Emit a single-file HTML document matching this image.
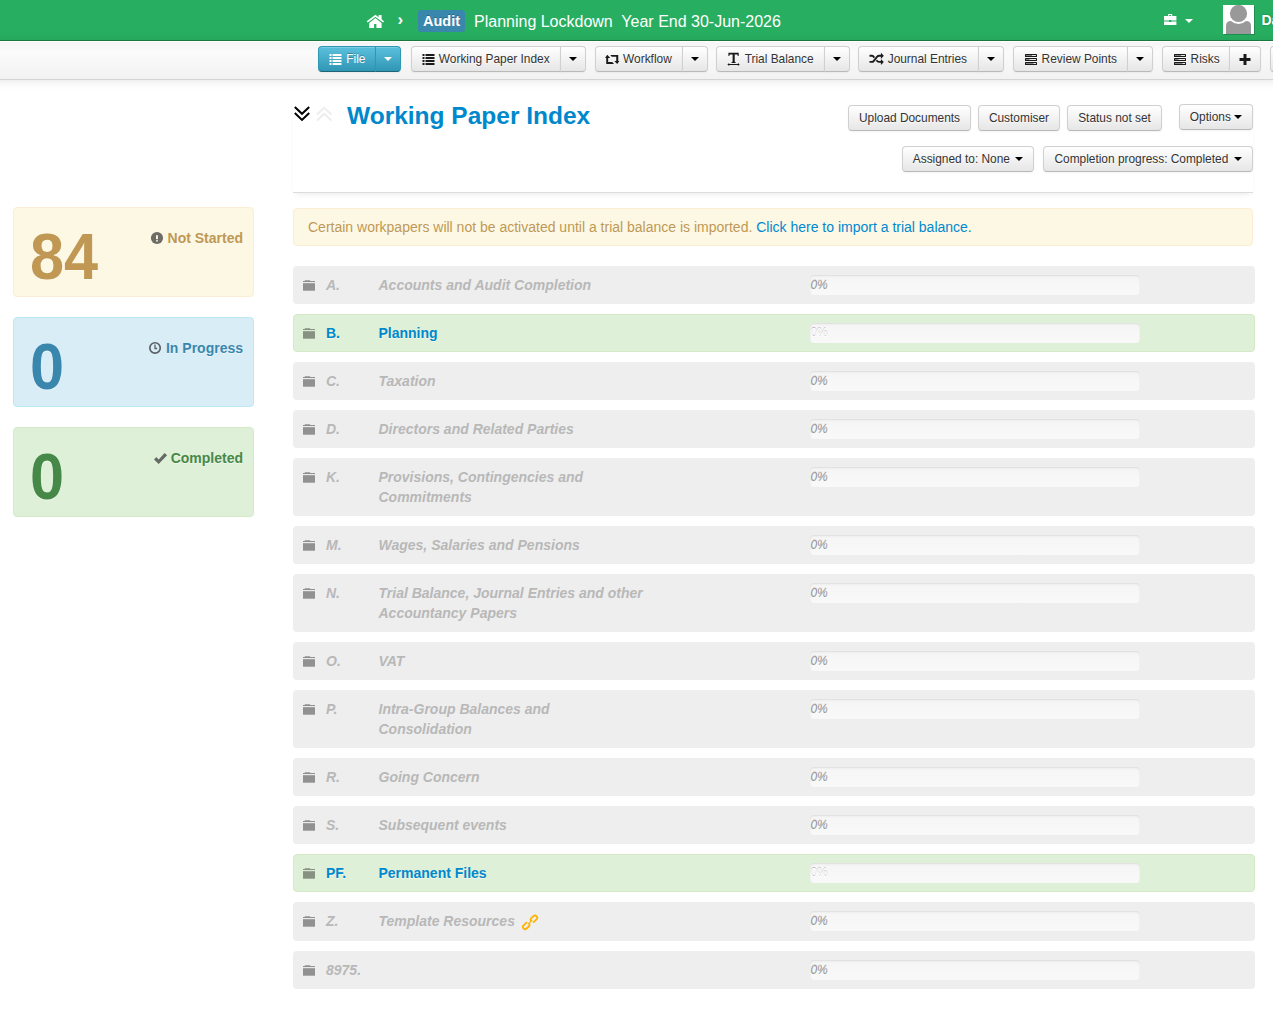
<!DOCTYPE html>
<html lang="en">
<head>
<meta charset="utf-8">
<title>Working Paper Index</title>
<style>
*{box-sizing:border-box;}
html,body{margin:0;padding:0;}
body{width:1273px;height:1017px;overflow:hidden;background:#fff;font-family:"Liberation Sans",Arial,Helvetica,sans-serif;font-size:14px;line-height:20px;color:#333;position:relative;}
a{color:#0088cc;text-decoration:none;}
svg{display:block;}
/* top navbar */
#nav{position:absolute;left:0;top:0;width:1273px;height:41px;background:#27ae60;border-bottom:1px solid #1a7d43;}
#nav .abs{position:absolute;}
#title{position:absolute;left:474px;top:11px;font-size:16px;line-height:21px;color:#fff;white-space:pre;}
#badge{position:absolute;left:418px;top:10px;width:47px;height:22px;border-radius:3px;background:#3a87ad;color:#fff;font-weight:bold;font-size:14.5px;line-height:23px;text-align:center;text-shadow:0 -1px 0 rgba(0,0,0,.25);}
#crumb{position:absolute;left:397.5px;top:10px;color:#fff;font-size:17px;line-height:20px;font-weight:bold;}
#avatar{position:absolute;left:1223px;top:5px;width:31px;height:29px;background:#fff;overflow:hidden;box-shadow:1px 1px 0 rgba(0,0,0,.18);}
#uname{position:absolute;left:1261.5px;top:10px;color:#fff;font-weight:bold;font-size:14px;line-height:20px;white-space:nowrap;text-shadow:0 0 2px rgba(0,80,30,.55);}
/* toolbar */
#bar{position:absolute;left:-20px;top:41px;width:1313px;padding-left:20px;height:39px;background:linear-gradient(#ffffff 0,#ffffff 1px,#f5f5f5 1px,#fbfbfb 11px,#f2f2f2 100%);border-bottom:1px solid #d4d4d4;box-shadow:0 1px 10px rgba(0,0,0,.1);}
.btn{position:absolute;height:26px;border:1px solid #cccccc;border-color:#d0d0d0 #d0d0d0 #b9b9b9;border-radius:4px;background:linear-gradient(#ffffff,#e6e6e6);color:#333;font-size:11.9px;line-height:20px;padding:2px 0;text-align:center;white-space:nowrap;text-shadow:0 1px 1px rgba(255,255,255,.75);box-shadow:inset 0 1px 0 rgba(255,255,255,.2),0 1px 2px rgba(0,0,0,.05);}
.btn.l{border-radius:4px 0 0 4px;}
.btn.r{border-radius:0 4px 4px 0;}
.btn.info{background:linear-gradient(#5bc0de,#2f96b4);border-color:#2f96b4 #2f96b4 #1f6377;color:#fff;text-shadow:0 -1px 0 rgba(0,0,0,.25);}
.btn svg{display:inline-block;vertical-align:-2px;margin-right:4px;}
.caret{display:inline-block;width:0;height:0;border-left:4px solid transparent;border-right:4px solid transparent;border-top:4px solid #000;vertical-align:middle;}
.btn .caret{margin-top:-1px;}
.btn.info .caret{border-top-color:#fff;}

#tb{position:absolute;left:20px;top:5px;white-space:nowrap;font-size:0;}
.bg{position:absolute;top:0;white-space:nowrap;}
.tbtn{display:inline-block;vertical-align:top;height:26px;border:1px solid #cccccc;border-color:#d0d0d0 #d0d0d0 #b9b9b9;background:linear-gradient(#ffffff,#e6e6e6);color:#333;font-size:11.9px;line-height:20px;padding:2px 10px;white-space:nowrap;text-shadow:0 1px 1px rgba(255,255,255,.75);box-shadow:inset 0 1px 0 rgba(255,255,255,.2),0 1px 2px rgba(0,0,0,.05);}
.tbtn.l{border-radius:4px 0 0 4px;}
.tbtn.r{border-radius:0 4px 4px 0;margin-left:-1px;}
.tbtn.c{padding:2px 8px;width:26px;}
.tbtn.p{padding:2px 8px;width:32px;}
.tbtn.info{background:linear-gradient(#5bc0de,#2f96b4);border-color:#2f96b4 #2f96b4 #1f6377;color:#fff;text-shadow:0 -1px 0 rgba(0,0,0,.25);}
.tbtn svg{display:inline-block;vertical-align:-3px;margin-right:3.3px;}
.tbtn.p svg{margin-right:0;}
.tbtn .caret{margin-top:-1px;}
.tbtn.info .caret{border-top-color:#fff;}
/* heading */
#h{position:absolute;left:347px;top:101px;margin:0;font-size:24.5px;line-height:30px;font-weight:bold;color:#0088cc;white-space:nowrap;}
#hr{position:absolute;left:293px;top:96px;width:960px;height:97px;border-bottom:1px solid #dcdcdc;box-shadow:0 4px 6px -3px rgba(0,0,0,.09);}
/* alert */
#alert{position:absolute;left:293px;top:208px;width:960px;height:38px;background:#fcf8e3;border:1px solid #fbeed5;border-radius:4px;color:#c09853;font-size:14px;line-height:20px;padding:8px 14px;white-space:nowrap;text-shadow:0 1px 0 rgba(255,255,255,.5);}
/* stat boxes */
.stat{position:absolute;left:13px;width:241px;height:90px;border-radius:4px;border:1px solid;text-shadow:0 1px 0 rgba(255,255,255,.5);}
.stat .num{position:absolute;left:16px;top:14px;font-size:64.5px;line-height:70px;font-weight:bold;transform:scaleX(.95);transform-origin:0 0;}
.stat .lab{position:absolute;right:10px;top:20px;font-size:14px;line-height:20px;font-weight:bold;white-space:nowrap;}
.stat .lab svg{display:inline-block;vertical-align:-1px;margin-right:2px;}
.si{position:absolute;left:0;top:0;}
#s1{top:207px;background:#fcf8e3;border-color:#fbeed5;color:#c09853;}
#s2{top:317px;background:#d9edf7;border-color:#bce8f1;color:#3a87ad;}
#s3{top:427px;background:#dff0d8;border-color:#d6e9c6;color:#468847;}
.lnk{position:absolute;left:228px;top:11.5px;}
/* rows */
.row{position:absolute;left:293px;width:962px;background:#eeeeee;border-radius:4px;font-size:14px;line-height:20px;font-weight:bold;font-style:italic;color:#b8b8b8;}
.row.on{background:#dff0d8;border:1px solid #d6e9c6;font-style:normal;color:#0088cc;text-shadow:0 1px 0 rgba(255,255,255,.5);}
.row .fold{position:absolute;left:10px;top:14px;}
.row.on .fold{left:9px;top:13px;}
.row .code{position:absolute;left:33px;top:9px;white-space:nowrap;}
.row .name{position:absolute;left:85.5px;top:9px;white-space:nowrap;}
.row.on .code{left:32px;top:8px;}
.row.on .name{left:84.5px;top:8px;}
.row .prog{position:absolute;left:517px;top:9px;width:330px;height:20px;border-radius:4px;background:linear-gradient(#f5f5f5,#f9f9f9);box-shadow:inset 0 1px 2px rgba(0,0,0,.1);font-size:12px;line-height:20px;text-shadow:0 -1px 0 rgba(0,0,0,.12);font-weight:normal;color:#999;padding-left:.4px;}
.row.on .prog{left:516px;top:8px;color:#fff;font-style:normal;text-shadow:0 -1px 0 rgba(0,0,0,.25);}
</style>
</head>
<body>
<div id="nav">
  <svg class="abs" style="left:366px;top:13px" width="19" height="16" viewBox="0 0 19 16"><path d="M1.9 8.4 L9.4 2.7 L16.9 8.4" fill="none" stroke="#fff" stroke-width="1.7" stroke-linecap="square"/><path d="M12.6 2 H15.6 V7 L12.6 4.6 Z M9.4 5.1 L3.2 9.9 V15 H8.1 V11.1 H10.4 V15 H15.6 V9.9 Z" fill="#fff"/></svg>
  <div id="crumb">›</div>
  <div id="badge">Audit</div>
  <div id="title">Planning Lockdown  Year End 30-Jun-2026</div>
  <svg class="abs" style="left:1164px;top:14px" width="13" height="11" viewBox="0 0 13 11"><path d="M4.2 0 H8.2 V2 H12.4 V6.6 H7.4 V5.9 H5 V6.6 H0 V2 H4.2 Z M5.2 1 V2 H7.2 V1 Z M0 7.4 H5 V8.1 H7.4 V7.4 H12.4 V11 H0 Z" fill="#fff" fill-rule="evenodd"/></svg>
  <span class="caret abs" style="left:1185px;top:19px;border-top-color:#fff"></span>
  <div id="avatar"><svg width="31" height="29" viewBox="0 0 31 29"><rect width="31" height="29" fill="#fff"/><path d="M3 29 V21 Q3 16 8 16 H23 Q28 16 28 21 V29 Z" fill="#999"/><circle cx="15.5" cy="8.5" r="10.5" fill="#fff"/><circle cx="15.5" cy="8.5" r="8.6" fill="#999"/></svg></div>
  <div id="uname">Da</div>
</div>

<div id="bar">
<div id="tb">
<div class="bg" style="left:318px"><span class="tbtn info l"><svg width="14" height="14" viewBox="0 0 14 14"><path d="M0.5 2h2v2h-2zM3.5 2h9v2h-9zM0.5 5h2v2h-2zM3.5 5h9v2h-9zM0.5 8h2v2h-2zM3.5 8h9v2h-9zM0.5 11h2v2h-2zM3.5 11h9v2h-9z" fill="#fff"/></svg>File</span>
<span class="tbtn info r c"><i class="caret"></i></span></div>
<div class="bg" style="left:410.5px"><span class="tbtn  l"><svg width="14" height="14" viewBox="0 0 14 14"><path d="M0.5 2h2v2h-2zM3.5 2h9v2h-9zM0.5 5h2v2h-2zM3.5 5h9v2h-9zM0.5 8h2v2h-2zM3.5 8h9v2h-9zM0.5 11h2v2h-2zM3.5 11h9v2h-9z" fill="#1a1a1a"/></svg>Working Paper Index</span>
<span class="tbtn  r c"><i class="caret"></i></span></div>
<div class="bg" style="left:594.75px"><span class="tbtn  l"><svg width="14" height="14" viewBox="0 0 14 14" style="overflow:visible"><path d="M1.25 2.8 L4.25 5.9 H2.15 V10.1 H6.25 L8.05 12.1 H0.25 V5.9 H-0.95 Z M11.25 12.1 L8.25 9.1 H10.25 V4.8 H5.75 L4.25 3 H12.25 V9.1 H13.35 Z" fill="#1a1a1a"/></svg>Workflow</span>
<span class="tbtn  r c"><i class="caret"></i></span></div>
<div class="bg" style="left:716.4px"><span class="tbtn  l"><svg width="14" height="14" viewBox="0 0 14 14"><path d="M1.4 0.8 H11.7 V3.9 H10.9 L10.3 2.4 H7.7 V9.6 Q7.7 10.2 8.8 10.4 V11 H4.4 V10.4 Q5.5 10.2 5.6 9.6 V2.4 H2.8 L2.2 3.9 H1.4 Z M0.4 12.5 L2.2 11 V12 H10.9 V11 L12.7 12.5 L10.9 14 V13 H2.2 V14 Z" fill="#1a1a1a"/></svg>Trial Balance</span>
<span class="tbtn  r c"><i class="caret"></i></span></div>
<div class="bg" style="left:858.4px"><span class="tbtn  l" style="width:120.2px"><svg width="15" height="14" viewBox="0 0 15 14" style="overflow:visible"><g fill="none" stroke="#1a1a1a" stroke-width="1.9" stroke-linejoin="round"><path d="M0.5 3.8 H3 Q4 3.8 5.3 5.6"/><path d="M0.5 9.9 H3.2 Q4 9.9 4.6 9.1 L8.2 4.7 Q9 3.8 10 3.8 H12.2"/><path d="M7.4 8.3 Q8.6 9.9 10 9.9 H12.2"/></g><path d="M11.9 0.7 L14.8 3.8 L11.9 6.9 Z M11.9 6.9 L14.8 9.9 L11.9 13 Z" fill="#1a1a1a"/></svg>Journal Entries</span>
<span class="tbtn  r c"><i class="caret"></i></span></div>
<div class="bg" style="left:1013.3px"><span class="tbtn  l"><svg width="14" height="14" viewBox="0 0 14 14"><g fill="#1a1a1a"><rect x="1" y="2" width="12" height="3" rx="0.6"/><rect x="1" y="6" width="12" height="3" rx="0.6"/><rect x="1" y="10" width="12" height="3" rx="0.6"/></g><g fill="#fff"><rect x="2" y="3" width="10" height="1" opacity=".45"/><rect x="2" y="7" width="10" height="1" opacity=".45"/><rect x="2" y="11" width="10" height="1" opacity=".45"/><rect x="8" y="3" width="4" height="1" opacity=".8"/><rect x="5.5" y="7" width="6.5" height="1" opacity=".8"/><rect x="9.5" y="11" width="2.5" height="1" opacity=".8"/></g></svg>Review Points</span>
<span class="tbtn  r c"><i class="caret"></i></span></div>
<div class="bg" style="left:1162.3px"><span class="tbtn  l" style="width:67.3px"><svg width="14" height="14" viewBox="0 0 14 14"><g fill="#1a1a1a"><rect x="1" y="2" width="12" height="3" rx="0.6"/><rect x="1" y="6" width="12" height="3" rx="0.6"/><rect x="1" y="10" width="12" height="3" rx="0.6"/></g><g fill="#fff"><rect x="2" y="3" width="10" height="1" opacity=".45"/><rect x="2" y="7" width="10" height="1" opacity=".45"/><rect x="2" y="11" width="10" height="1" opacity=".45"/><rect x="8" y="3" width="4" height="1" opacity=".8"/><rect x="5.5" y="7" width="6.5" height="1" opacity=".8"/><rect x="9.5" y="11" width="2.5" height="1" opacity=".8"/></g></svg>Risks</span>
<span class="tbtn  r p"><svg width="14" height="14" viewBox="0 0 14 14"><path d="M5.5 2h3v4h4v3h-4v4h-3V9h-4V6h4z" fill="#1a1a1a"/></svg></span></div>
<div class="bg" style="left:1269.8px"><span class="tbtn  l"><svg width="14" height="14" viewBox="0 0 14 14"><g fill="#1a1a1a"><rect x="1" y="2" width="12" height="3" rx="0.6"/><rect x="1" y="6" width="12" height="3" rx="0.6"/><rect x="1" y="10" width="12" height="3" rx="0.6"/></g><g fill="#fff"><rect x="2" y="3" width="10" height="1" opacity=".45"/><rect x="2" y="7" width="10" height="1" opacity=".45"/><rect x="2" y="11" width="10" height="1" opacity=".45"/><rect x="8" y="3" width="4" height="1" opacity=".8"/><rect x="5.5" y="7" width="6.5" height="1" opacity=".8"/><rect x="9.5" y="11" width="2.5" height="1" opacity=".8"/></g></svg></span>
<span class="tbtn  r c"><i class="caret"></i></span></div>
</div>
</div>
</div>

<div id="hr"></div>
<h3 id="h">Working Paper Index</h3>

<div class="btn" style="left:848px;top:105px;width:123px">Upload Documents</div>
<div class="btn" style="left:978px;top:105px;width:82px">Customiser</div>
<div class="btn" style="left:1067px;top:105px;width:95px">Status not set</div>
<div class="btn" style="left:1179px;top:104px;width:74px">Options <i class="caret"></i></div>
<div class="btn" style="left:902px;top:146px;width:132px">Assigned to: None <i class="caret" style="margin-left:2px"></i></div>
<div class="btn" style="left:1043px;top:146px;width:210px">Completion progress: Completed <i class="caret" style="margin-left:2px"></i></div>
<svg id="chev" style="position:absolute;left:293px;top:105px" width="40" height="18" viewBox="0 0 40 18"><g fill="none" stroke-width="2"><path d="M1.8 2 L9 8.8 L16.2 2 M1.8 8.1 L9 14.9 L16.2 8.1" stroke="#000"/><path d="M24 9.6 L31.2 2.8 L38.4 9.6 M24 15.6 L31.2 8.8 L38.4 15.6" stroke="#eeeded"/></g></svg>


<div id="alert">Certain workpapers will not be activated until a trial balance is imported. <a>Click here to import a trial balance.</a></div>

<div class="stat" id="s1"><div class="num">84</div><div class="lab">Not Started</div><svg class="si" width="239" height="88" viewBox="0 0 239 88"><circle cx="143" cy="30" r="6.1" fill="#6d6c66"/><rect x="142.05" y="27.2" width="1.9" height="4" fill="#fcf8e3"/><rect x="142.05" y="32.2" width="1.9" height="1.3" fill="#fcf8e3"/></svg></div>
<div class="stat" id="s2"><div class="num">0</div><div class="lab">In Progress</div><svg class="si" width="239" height="88" viewBox="0 0 239 88"><circle cx="141.05" cy="29.95" r="5.2" fill="none" stroke="#5a6066" stroke-width="1.7"/><path d="M141 26.6 V30.5 H143.2" fill="none" stroke="#5a6066" stroke-width="1.3"/></svg></div>
<div class="stat" id="s3"><div class="num">0</div><div class="lab">Completed</div><svg class="si" width="239" height="88" viewBox="0 0 239 88"><path d="M140.0 31.4 L142.3 29.0 L144.7 31.5 L150.6 25.0 L153.1 27.3 L144.7 36.0 Z" fill="#656a63"/></svg></div>

<div id="rows">
<div class="row" style="top:266px;height:38px"><svg class="fold" width="12" height="11" viewBox="0 0 12 11"><g fill="#000" opacity=".39"><rect x="1.8" y="0" width="5.4" height="1.2" opacity=".75"/><rect x="0" y="1" width="12" height="1.05"/><rect x="0" y="3.2" width="12" height="7.5"/></g></svg><span class="code">A.</span><span class="name">Accounts and Audit Completion</span><div class="prog">0%</div></div>
<div class="row on" style="top:314px;height:38px"><svg class="fold" width="12" height="11" viewBox="0 0 12 11"><g fill="#000" opacity=".39"><rect x="1.8" y="0" width="5.4" height="1.2" opacity=".75"/><rect x="0" y="1" width="12" height="1.05"/><rect x="0" y="3.2" width="12" height="7.5"/></g></svg><span class="code">B.</span><span class="name">Planning</span><div class="prog">0%</div></div>
<div class="row" style="top:362px;height:38px"><svg class="fold" width="12" height="11" viewBox="0 0 12 11"><g fill="#000" opacity=".39"><rect x="1.8" y="0" width="5.4" height="1.2" opacity=".75"/><rect x="0" y="1" width="12" height="1.05"/><rect x="0" y="3.2" width="12" height="7.5"/></g></svg><span class="code">C.</span><span class="name">Taxation</span><div class="prog">0%</div></div>
<div class="row" style="top:410px;height:38px"><svg class="fold" width="12" height="11" viewBox="0 0 12 11"><g fill="#000" opacity=".39"><rect x="1.8" y="0" width="5.4" height="1.2" opacity=".75"/><rect x="0" y="1" width="12" height="1.05"/><rect x="0" y="3.2" width="12" height="7.5"/></g></svg><span class="code">D.</span><span class="name">Directors and Related Parties</span><div class="prog">0%</div></div>
<div class="row" style="top:458px;height:58px"><svg class="fold" width="12" height="11" viewBox="0 0 12 11"><g fill="#000" opacity=".39"><rect x="1.8" y="0" width="5.4" height="1.2" opacity=".75"/><rect x="0" y="1" width="12" height="1.05"/><rect x="0" y="3.2" width="12" height="7.5"/></g></svg><span class="code">K.</span><span class="name">Provisions, Contingencies and<br>Commitments</span><div class="prog">0%</div></div>
<div class="row" style="top:526px;height:38px"><svg class="fold" width="12" height="11" viewBox="0 0 12 11"><g fill="#000" opacity=".39"><rect x="1.8" y="0" width="5.4" height="1.2" opacity=".75"/><rect x="0" y="1" width="12" height="1.05"/><rect x="0" y="3.2" width="12" height="7.5"/></g></svg><span class="code">M.</span><span class="name">Wages, Salaries and Pensions</span><div class="prog">0%</div></div>
<div class="row" style="top:574px;height:58px"><svg class="fold" width="12" height="11" viewBox="0 0 12 11"><g fill="#000" opacity=".39"><rect x="1.8" y="0" width="5.4" height="1.2" opacity=".75"/><rect x="0" y="1" width="12" height="1.05"/><rect x="0" y="3.2" width="12" height="7.5"/></g></svg><span class="code">N.</span><span class="name">Trial Balance, Journal Entries and other<br>Accountancy Papers</span><div class="prog">0%</div></div>
<div class="row" style="top:642px;height:38px"><svg class="fold" width="12" height="11" viewBox="0 0 12 11"><g fill="#000" opacity=".39"><rect x="1.8" y="0" width="5.4" height="1.2" opacity=".75"/><rect x="0" y="1" width="12" height="1.05"/><rect x="0" y="3.2" width="12" height="7.5"/></g></svg><span class="code">O.</span><span class="name">VAT</span><div class="prog">0%</div></div>
<div class="row" style="top:690px;height:58px"><svg class="fold" width="12" height="11" viewBox="0 0 12 11"><g fill="#000" opacity=".39"><rect x="1.8" y="0" width="5.4" height="1.2" opacity=".75"/><rect x="0" y="1" width="12" height="1.05"/><rect x="0" y="3.2" width="12" height="7.5"/></g></svg><span class="code">P.</span><span class="name">Intra-Group Balances and<br>Consolidation</span><div class="prog">0%</div></div>
<div class="row" style="top:758px;height:38px"><svg class="fold" width="12" height="11" viewBox="0 0 12 11"><g fill="#000" opacity=".39"><rect x="1.8" y="0" width="5.4" height="1.2" opacity=".75"/><rect x="0" y="1" width="12" height="1.05"/><rect x="0" y="3.2" width="12" height="7.5"/></g></svg><span class="code">R.</span><span class="name">Going Concern</span><div class="prog">0%</div></div>
<div class="row" style="top:806px;height:38px"><svg class="fold" width="12" height="11" viewBox="0 0 12 11"><g fill="#000" opacity=".39"><rect x="1.8" y="0" width="5.4" height="1.2" opacity=".75"/><rect x="0" y="1" width="12" height="1.05"/><rect x="0" y="3.2" width="12" height="7.5"/></g></svg><span class="code">S.</span><span class="name">Subsequent events</span><div class="prog">0%</div></div>
<div class="row on" style="top:854px;height:38px"><svg class="fold" width="12" height="11" viewBox="0 0 12 11"><g fill="#000" opacity=".39"><rect x="1.8" y="0" width="5.4" height="1.2" opacity=".75"/><rect x="0" y="1" width="12" height="1.05"/><rect x="0" y="3.2" width="12" height="7.5"/></g></svg><span class="code">PF.</span><span class="name">Permanent Files</span><div class="prog">0%</div></div>
<div class="row" style="top:902px;height:39px"><svg class="fold" width="12" height="11" viewBox="0 0 12 11"><g fill="#000" opacity=".39"><rect x="1.8" y="0" width="5.4" height="1.2" opacity=".75"/><rect x="0" y="1" width="12" height="1.05"/><rect x="0" y="3.2" width="12" height="7.5"/></g></svg><span class="code">Z.</span><span class="name">Template Resources</span><svg class="lnk" width="18" height="17" viewBox="0 0 18 17"><g fill="none" stroke="#fdb400" stroke-linecap="round"><path d="M7.2 9.9 L10.9 6.5" stroke-width="1.2"/><g stroke-width="1.8"><path transform="translate(5.2 11.9) rotate(-43)" d="M2.4 -2.2 H-1.5 A2.2 2.2 0 0 0 -1.5 2.2 H1.5 A2.2 2.2 0 0 0 3.5 1"/><path transform="translate(12.9 4.8) rotate(137)" d="M2.4 -2.2 H-1.5 A2.2 2.2 0 0 0 -1.5 2.2 H1.5 A2.2 2.2 0 0 0 3.5 1"/></g></g></svg><div class="prog">0%</div></div>
<div class="row" style="top:951px;height:38px"><svg class="fold" width="12" height="11" viewBox="0 0 12 11"><g fill="#000" opacity=".39"><rect x="1.8" y="0" width="5.4" height="1.2" opacity=".75"/><rect x="0" y="1" width="12" height="1.05"/><rect x="0" y="3.2" width="12" height="7.5"/></g></svg><span class="code">8975.</span><span class="name"></span><div class="prog">0%</div></div>
</div>
</body>
</html>
